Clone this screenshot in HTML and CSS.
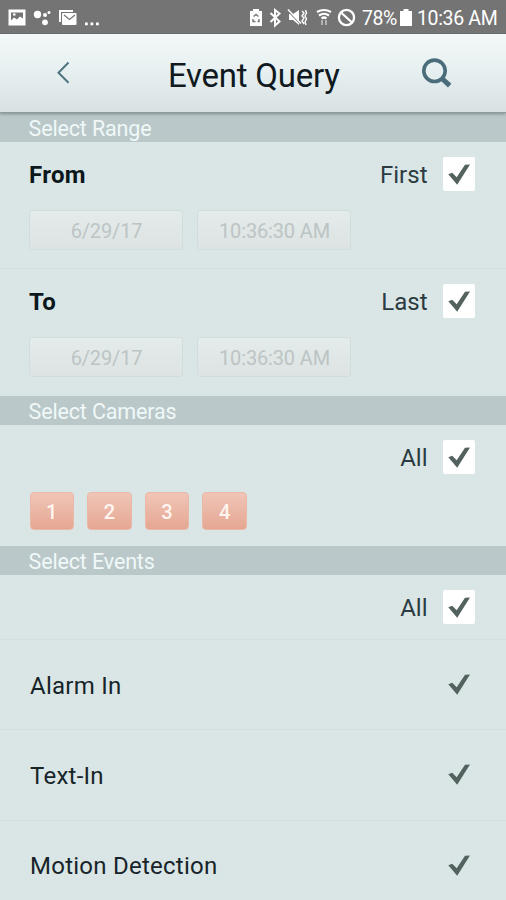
FILE: index.html
```
<!DOCTYPE html>
<html lang="en">
<head>
<meta charset="utf-8">
<title>Event Query</title>
<link rel="stylesheet" href="styles.css">
</head>
<body>
<svg width="0" height="0" class="defs">
  <symbol id="check" viewBox="0 0 22 21"><path d="M0.3 10.200 L4.200 8.800 L8.700 13.300 L17 0.800 L22 0.500 L9.200 20.800 Z"/></symbol>
</svg>
<div class="status">
  <svg class="status-icons" width="104" height="34" viewBox="0 0 104 34" fill="#fff">
    <path fill-rule="evenodd" d="M8.500 9.500h17v16h-17zM11 12.500v8l3-3 3 2 3-3 3 2v-6zM13 13.500h2.500v2H13z"/>
    <circle cx="37.500" cy="14.500" r="3.700"/><circle cx="45" cy="15" r="2"/><circle cx="49" cy="12.500" r="1.500"/><circle cx="45" cy="22.300" r="2.900"/>
    <path d="M59 10h14v2H61v10h-2z"/>
    <rect x="62" y="13" width="14.500" height="12" rx="1"/>
    <path d="M64 15l5.500 4.500L75 15" fill="none" stroke="#777" stroke-width="1.300"/>
    <path d="M85 22.500h2.800v2.800H85zM90.500 22.500h2.800v2.800h-2.800zM96 22.500h2.800v2.800H96z"/>
  </svg>
  <svg class="status-icons" width="108" height="34" viewBox="248 0 108 34" fill="#fff">
    <path d="M253 9h6v2h3v15h-12V11h3z"/>
    <path d="M253.500 16.500l2.500-2 2.500 2M253 19v2.500h2.500M259 19v2.500h-1.500" fill="none" stroke="#777" stroke-width="1.400"/>
    <path d="M270.500 13l9 8.500-4.500 4V10l4.500 3.500-9 8.500" fill="none" stroke="#fff" stroke-width="2"/>
    <path d="M289 14h4l6-4v15l-6-5h-4z"/>
    <path d="M288.500 11.500l12 12.500" stroke="#777" stroke-width="1.300"/><path d="M288 9.500l13 14" stroke="#fff" stroke-width="1.500"/>
    <path d="M302 11l2 2-2 3 2 2-2 3 2 3M305.500 10l1 3-1.500 3 1.500 3-1.500 3 1 3" fill="none" stroke="#fff" stroke-width="1.400"/>
    <g fill="none" stroke="#fff" stroke-width="2.200"><path d="M317 12q7-4 14 0M319 15.500q5-3.500 10 0M321.500 18.500q2.500-2 5 0"/><path stroke="#bbb" stroke-width="1.800" d="M322 20v5M326 20v5"/></g>
    <circle cx="346.500" cy="17.500" r="7.600" fill="none" stroke="#fff" stroke-width="2.300"/><path d="M341 12.500l11 10" stroke="#fff" stroke-width="2.300"/>
  </svg>
  <span class="percent">78%</span>
  <svg class="battery" width="12" height="17" viewBox="0 0 12 17" fill="#fff"><path d="M3.500 0h5v2H12v15H0V2h3.500z"/></svg>
  <span class="clock">10:36 AM</span>
</div>
<header class="header">
  <svg class="back" width="16" height="24" viewBox="0 0 16 24"><path d="M13.500 1.500L3.500 11.700l10 10.100" fill="none" stroke="#507580" stroke-width="2"/></svg>
  <h1>Event Query</h1>
  <svg class="search" width="34" height="34" viewBox="0 0 34 34"><circle cx="14.500" cy="13.800" r="10.700" fill="none" stroke="#4b6d7b" stroke-width="3.600"/><path d="M22 21.500l7.700 7.200" stroke="#4b6d7b" stroke-width="5"/></svg>
</header>
<main>
  <h2 class="first-bar">Select Range</h2>
  <section class="range">
    <div class="line"><b>From</b><span class="opt">First</span><i class="box"><svg class="check"><use href="#check"/></svg></i></div>
    <div class="fields"><button disabled>6/29/17</button><button disabled>10:36:30 AM</button></div>
  </section>
  <section class="range last">
    <div class="line"><b>To</b><span class="opt">Last</span><i class="box"><svg class="check"><use href="#check"/></svg></i></div>
    <div class="fields"><button disabled>6/29/17</button><button disabled>10:36:30 AM</button></div>
  </section>
  <h2>Select Cameras</h2>
  <section class="cameras">
    <div class="line"><span class="opt">All</span><i class="box"><svg class="check"><use href="#check"/></svg></i></div>
    <div class="cams"><span>1</span><span>2</span><span>3</span><span>4</span></div>
  </section>
  <h2>Select Events</h2>
  <div class="line all-events"><span class="opt">All</span><i class="box"><svg class="check"><use href="#check"/></svg></i></div>
  <div class="event"><span>Alarm In</span><svg class="check"><use href="#check"/></svg></div>
  <div class="event"><span>Text-In</span><svg class="check"><use href="#check"/></svg></div>
  <div class="event"><span>Motion Detection</span><svg class="check"><use href="#check"/></svg></div>
</main>
</body>
</html>
```
FILE: styles.css
```
* { box-sizing: border-box; }
body { margin: 0; width: 506px; height: 900px; overflow: hidden; background: #dae6e5; color: #17242a; font-family: Roboto, sans-serif; }
.defs { display: block; height: 0; width: 0; }
.status { height: 34px; display: flex; align-items: center; background: #747474; border-bottom: 1px solid #626262; color: #fff; font-size: 20px; white-space: nowrap; }
.status-icons { flex: none; }
.status-icons + .status-icons { margin-left: 144px; }
.percent { width: 34px; margin: 3px 0 0 6px; font-size: 19.500px; letter-spacing: -.5px; }
.battery { margin: 2px 0 0 4px; flex: none; }
.clock { margin: 3px 0 0 5px; font-size: 19.500px; letter-spacing: -.35px; }
.header { position: relative; height: 79px; display: flex; align-items: center; background: linear-gradient(#f3f8f8, #e5eeef 55%, #d9e1e3); border-bottom: 1px solid #929c9e; box-shadow: 0 1px 3px #7f8c8f; }
.back { margin: -1px 0 0 55px; }
h1 { margin: 5px 0 0 97px; width: 173px; font-size: 33px; line-height: 40px; letter-spacing: -.25px; font-weight: 400; color: #10191d; white-space: nowrap; }
.search { margin: 1px 0 0 79px; }
h2 { margin: 0; height: 29px; padding: 1px 0 0 28.500px; background: #bac8ca; color: #f0f8f8; font-size: 21.500px; line-height: 29px; letter-spacing: -.14px; font-weight: 400; white-space: nowrap; }
.range { height: 127px; padding-top: 15px; border-bottom: 1px solid #d3dfdf; }
.range.last { border-bottom: 0; }
.line { display: flex; align-items: center; height: 34px; padding: 0 31px 0 29px; }
.line b { margin-top: 2px; font-size: 24px; font-weight: 700; letter-spacing: .3px; color: #0c171c; }
.opt { margin: 1px 15.500px 0 auto; font-size: 24px; color: #2b3b42; }
.box { width: 32px; height: 34px; padding: 7px 0 0 5px; background: #fff; border-radius: 2px; }
.check { display: block; width: 22px; height: 21px; fill: #53625f; flex: none; }
.fields { display: flex; gap: 14px; padding: 19px 0 0 29px; }
.fields button { width: 154px; height: 40px; padding: 2px 0 0 1px; border: 1px solid #d1dddd; border-radius: 3px; background: linear-gradient(#e4eceb, #dce3e2); color: #bcc4c4; font-family: inherit; font-size: 20px; letter-spacing: -.15px; white-space: nowrap; }
.cameras { height: 121px; padding-top: 15px; }
.cams { display: flex; gap: 13px; padding: 18px 0 0 29.500px; }
.cams span { width: 44.600px; height: 38px; padding-top: 1px; text-align: center; border-radius: 4px; border: 1px solid #e9b8a7; background: linear-gradient(#f0c5b7, #e5a792); color: #fff5f0; font-size: 20px; font-weight: 500; line-height: 37px; }
.all-events { height: 65px; border-bottom: 1px solid #d3dfdf; }
.event { height: 90.300px; display: flex; align-items: center; justify-content: space-between; padding: 0 36px 0 30px; border-bottom: 1px solid #d3dfdf; font-size: 24px; letter-spacing: .25px; color: #17242a; }
.event span { margin-top: 2px; }
```
